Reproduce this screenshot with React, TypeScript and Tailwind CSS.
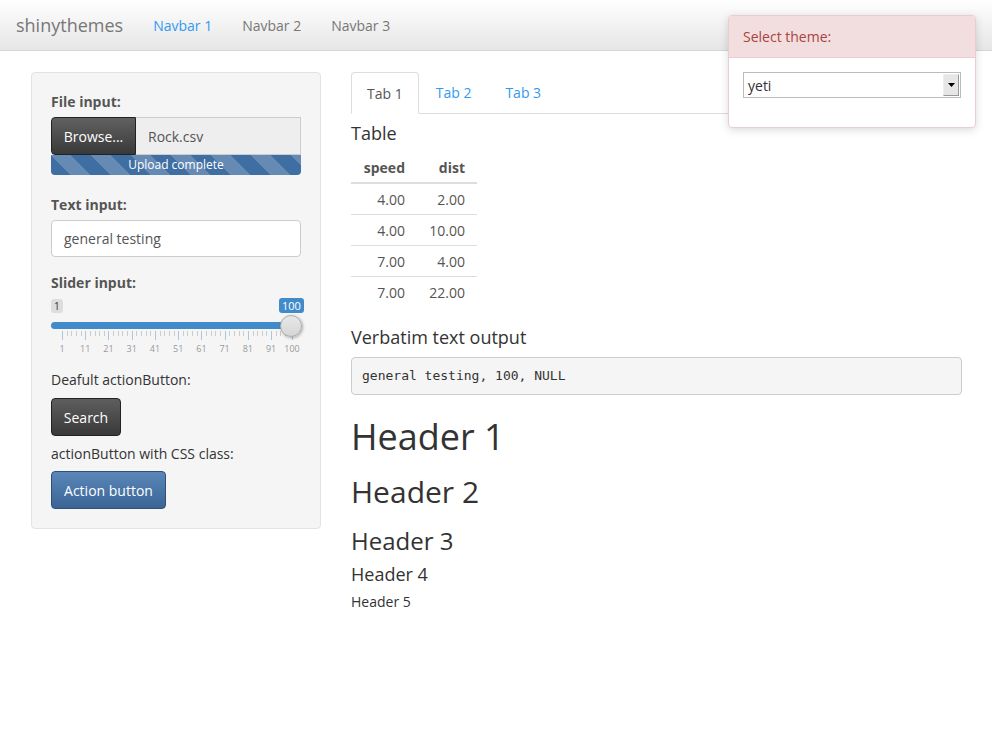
import React from "react";

const font = { fontFamily: '"Open Sans", "Noto Sans", sans-serif' };

const majors = [1, 11, 21, 31, 41, 51, 61, 71, 81, 91, 100];
const pos = (v: number) => 11 + ((v - 1) / 99) * 230;

const Navbar = () => (
  <div className="h-[51px] border-b border-[#d4d4d4] bg-[linear-gradient(#ffffff,#e6e6e6)] flex items-center">
    <span className="ml-4 text-[18px] text-[#777]">shinythemes</span>
    <nav className="flex ml-[30px] text-[14px]">
      <a className="text-[#3399f3]">Navbar 1</a>
      <a className="ml-[30px] text-[#777]">Navbar 2</a>
      <a className="ml-[30px] text-[#777]">Navbar 3</a>
    </nav>
  </div>
);

const Slider = () => (
  <div className="relative h-[66px] w-[250px]">
    <span className="absolute left-0 top-[6px] h-[14px] px-[3px] rounded-[3px] bg-[#ddd] text-[10px] leading-[14px] text-[#333]">1</span>
    <span className="absolute left-[228px] top-[5px] h-[15px] px-[3px] rounded-[3px] bg-[#428bca] text-[11px] leading-[15px] text-white">100</span>
    <div className="absolute left-0 top-[29px] h-[7px] w-[250px] rounded-full bg-[#428bca]" />
    <svg className="absolute left-0 top-[38px]" width="250" height="12">
      {Array.from({ length: 50 }, (_, i) => 1 + i * 2).concat([100]).map((v) => {
        const major = majors.includes(v);
        const x = Math.round(pos(v)) + 0.5;
        return (
          <line key={v} x1={x} x2={x} y1={0} y2={major ? 9 : 5} stroke={major ? "#a8c6e2" : "#ccc"} strokeWidth={1} />
        );
      })}
    </svg>
    {majors.map((v) => (
      <span
        key={v}
        className="absolute top-[50px] text-[9px] leading-[11px] text-[#999] -translate-x-1/2"
        style={{ left: pos(v) }}
      >
        {v}
      </span>
    ))}
    <div className="absolute left-[229px] top-[22px] h-[22px] w-[22px] rounded-full border border-[#aaa] bg-[linear-gradient(#e8e8e8,#d6d6d6)] shadow-[1px_1px_3px_rgba(0,0,0,0.3)]" />
  </div>
);

const Sidebar = () => (
  <div className="w-[290px] shrink-0 self-start rounded border border-[#e3e3e3] bg-[#f5f5f5] p-[19px] text-[14px] text-[#333]">
    <div className="font-bold leading-5 text-[#555]">File input:</div>
    <div className="mt-[5px] flex h-[38px]">
      <div className="flex w-[85px] items-center justify-center rounded-l border border-[#222] bg-[linear-gradient(#616161,#393939)] text-white">Browse...</div>
      <div className="flex flex-1 items-center border border-l-0 border-[#ccc] bg-[#eee] pl-[12px] text-[#555]">Rock.csv</div>
    </div>
    <div className="flex h-[20px] items-center justify-center rounded-b bg-[#3f6ea3] bg-[linear-gradient(45deg,rgba(255,255,255,.2)_25%,transparent_25%,transparent_50%,rgba(255,255,255,.2)_50%,rgba(255,255,255,.2)_75%,transparent_75%,transparent)] bg-[length:40px_40px] text-[12px] text-white">
      Upload complete
    </div>
    <div className="mt-[20px] font-bold leading-5 text-[#555]">Text input:</div>
    <div className="mt-[5px] flex h-[37px] items-center rounded border border-[#ccc] bg-white pl-[12px] text-[#555]">general testing</div>
    <div className="mt-[16px] font-bold leading-5 text-[#555]">Slider input:</div>
    <Slider />
    <div className="mt-[11px] leading-5">Deafult actionButton:</div>
    <div className="mt-[8px] flex h-[38px] w-[70px] items-center justify-center rounded border border-[#222] bg-[linear-gradient(#5e5e5e,#393939)] text-white">Search</div>
    <div className="mt-[8px] leading-5">actionButton with CSS class:</div>
    <div className="mt-[7px] flex h-[38px] w-[115px] items-center justify-center rounded border border-[#2e5077] bg-[linear-gradient(#5a87b8,#3a6496)] text-white">Action button</div>
  </div>
);

const rows = [
  ["4.00", "2.00"],
  ["4.00", "10.00"],
  ["7.00", "4.00"],
  ["7.00", "22.00"],
];

const Main = () => (
  <div className="ml-[30px] w-[611px] text-[14px] text-[#333]">
    <div className="flex h-[42px] border-b border-[#ddd]">
      <div className="-mb-px flex h-[42px] items-center rounded-t border border-[#ddd] border-b-white bg-white px-[15px] text-[#555]">Tab 1</div>
      <div className="ml-[2px] flex items-center px-[15px] text-[#3399f3]">Tab 2</div>
      <div className="ml-[4px] flex items-center px-[15px] text-[#3399f3]">Tab 3</div>
    </div>
    <div className="mt-[9px] text-[18px] leading-5">Table</div>
    <table className="mt-[9px] w-[126px] border-separate border-spacing-0 text-[#555]">
      <thead>
        <tr>
          <th className="h-[32px] w-[62px] border-b-2 border-[#ddd] pr-2 text-right font-bold">speed</th>
          <th className="h-[32px] w-[64px] border-b-2 border-[#ddd] pr-3 text-right font-bold">dist</th>
        </tr>
      </thead>
      <tbody>
        {rows.map((r, i) => (
          <tr key={i}>
            <td className={`pr-2 text-right ${i > 0 ? "h-[31px] border-t border-[#ddd]" : "h-[30px]"}`}>{r[0]}</td>
            <td className={`pr-3 text-right ${i > 0 ? "h-[31px] border-t border-[#ddd]" : "h-[30px]"}`}>{r[1]}</td>
          </tr>
        ))}
      </tbody>
    </table>
    <div className="mt-[20px] text-[18px] leading-5">Verbatim text output</div>
    <pre
      className="mt-[10px] flex h-[38px] items-center rounded border border-[#ccc] bg-[#f5f5f5] px-[10px] text-[13px] text-[#333]"
      style={{ fontFamily: '"DejaVu Sans Mono", "Liberation Mono", monospace' }}
    >
      general testing, 100, NULL
    </pre>
    <h1 className="mt-[22px] text-[36px] leading-[40px]">Header 1</h1>
    <h2 className="mt-[18px] text-[30px] leading-[33px]">Header 2</h2>
    <h3 className="mt-[20px] text-[24px] leading-[26px]">Header 3</h3>
    <h4 className="mt-[10px] text-[18px] leading-[20px]">Header 4</h4>
    <h5 className="mt-[10px] text-[14px] leading-[15px]">Header 5</h5>
  </div>
);

const ThemePicker = () => (
  <div className="absolute left-[728px] top-[15px] w-[248px] h-[113px] rounded border border-[#ebccd1] bg-white shadow-[0_2px_8px_rgba(0,0,0,0.15)]">
    <div className="flex h-[42px] items-center rounded-t border-b border-[#ebccd1] bg-[#f2dede] pl-[14px] text-[14px] text-[#a94442]">
      Select theme:
    </div>
    <div className="ml-[14px] mt-[14px] flex h-[26px] w-[218px] items-center justify-between border border-[#bbb] bg-white text-[14px] text-[#333]">
      <span className="pl-[4px]">yeti</span>
      <div className="mr-px flex h-[22px] w-[16px] items-center justify-center border border-[#999] border-l-[#eee] border-t-[#eee] bg-[#e6e6e6]">
        <svg width="7" height="4" viewBox="0 0 7 4">
          <path d="M0 0h7L3.5 4z" fill="#000" />
        </svg>
      </div>
    </div>
  </div>
);

export default function App() {
  return (
    <div className="relative min-h-[744px] bg-white" style={font}>
      <Navbar />
      <div className="flex pl-[31px] pt-[21px]">
        <Sidebar />
        <Main />
      </div>
      <ThemePicker />
    </div>
  );
}
